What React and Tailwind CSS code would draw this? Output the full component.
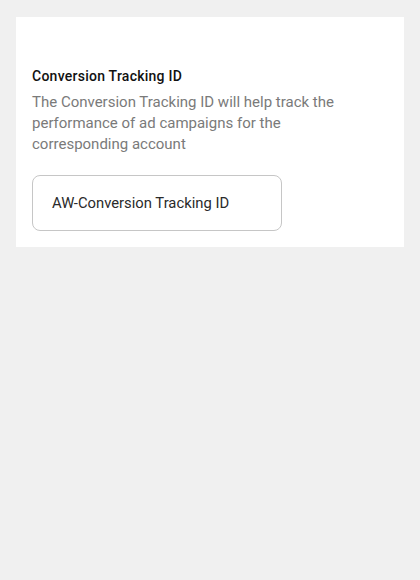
export default function App() {
    return (
        <div className="min-h-[580px] w-[420px] bg-[#f0f0f0] pt-[17px] px-4" style={{ fontFamily: 'Roboto, "Noto Sans", sans-serif' }}>
            <div className="bg-white px-4 pt-[49px] pb-4">
                <h2 className="text-[14px] leading-[20px] font-medium tracking-[0.25px] text-[#111111]">
                    Conversion Tracking ID
                </h2>
                <p className="mt-[6px] text-[15px] leading-[21px] text-[#7a7a7a] pr-10">
                    The Conversion Tracking ID will help track the performance of ad campaigns for the corresponding account
                </p>
                <div className="mt-[20px] w-[250px] h-[56px] border border-[#c6c6c6] rounded-lg flex items-center px-[19px]">
                    <span className="text-[14.8px] text-[#2a2a2a]">AW-Conversion Tracking ID</span>
                </div>
            </div>
        </div>
    );
}
